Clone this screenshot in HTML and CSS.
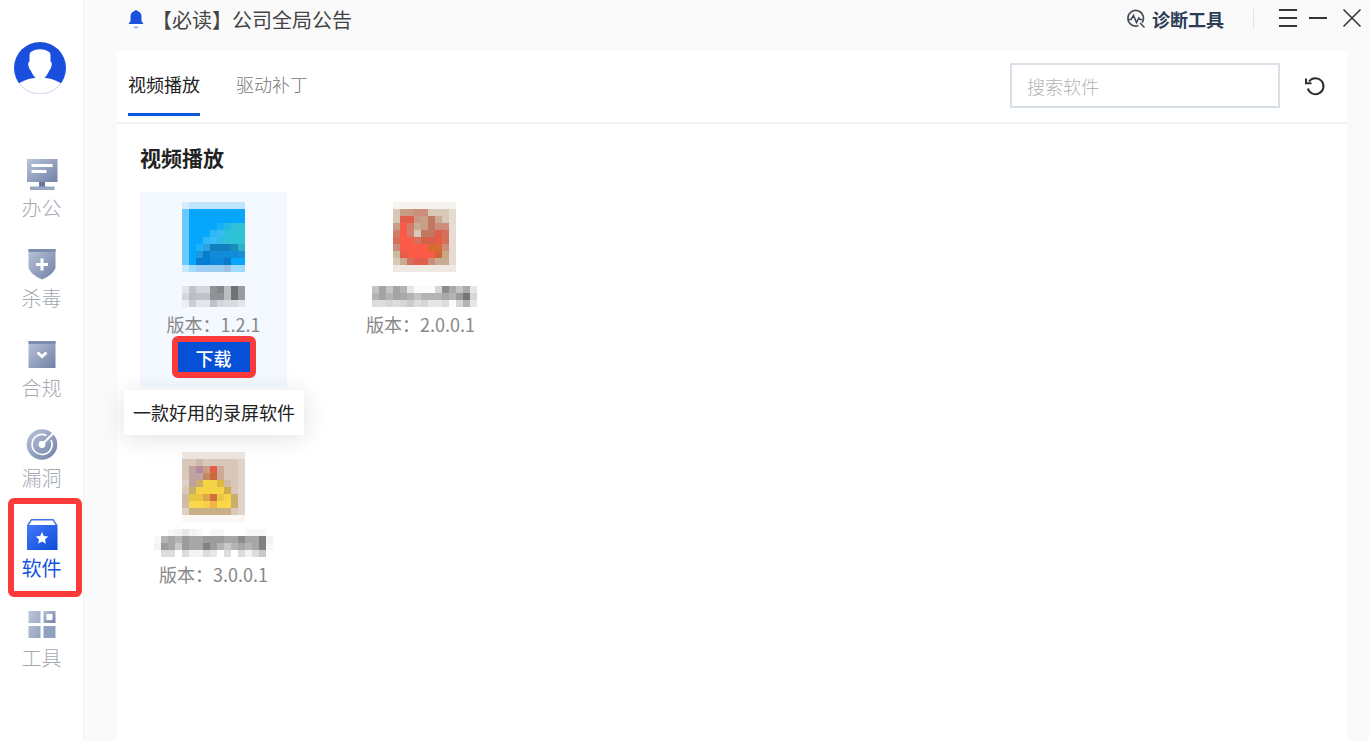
FILE: index.html
```html
<!DOCTYPE html>
<html lang="zh-CN">
<head>
<meta charset="utf-8">
<title>软件</title>
<link rel="stylesheet" href="styles.css">
</head>
<body>
<div class="app">
  <aside class="sidebar">
    <button class="avatar" aria-label="用户">
      <svg viewBox="0 0 52 52" width="52" height="52">
        <defs><clipPath id="round"><circle cx="26" cy="26" r="26"/></clipPath></defs>
        <circle cx="26" cy="26" r="26" fill="#194fdc"/>
        <g clip-path="url(#round)" fill="#fff">
          <path d="M15.500 13Q15.500 10 18.500 9Q21 7.300 26 7.300T33.500 9Q36.500 10 36.500 13V19.500Q38.500 20.500 37.500 24Q36.800 27 35.300 28.500Q33.500 33 30 36.500H22Q18.500 33 16.700 28.500Q15.200 27 14.500 24Q13.500 20.500 15.500 19.500Z"/>
          <path d="M4.500 41.500Q14 35.500 26 35.500T47.500 41.500L44 54H8Z"/>
        </g>
        <path d="M5 41A25.500 25.500 0 0 0 47 41" fill="none" stroke="#d3dbf4"/>
      </svg>
    </button>
    <nav class="nav">
      <button class="nav-item">
        <svg class="nav-icon" viewBox="0 0 40 40">
          <defs>
            <linearGradient id="steel" x1="0" y1="0" x2="1" y2="1"><stop offset="0" stop-color="#b8c4d9"/><stop offset="1" stop-color="#7081a6"/></linearGradient>
            <linearGradient id="pale" x1="0" y1="0" x2="1" y2="1"><stop offset="0" stop-color="#bcc7da"/><stop offset="1" stop-color="#93a2bf"/></linearGradient>
            <linearGradient id="royal" x1="0" y1="0" x2="1" y2="1"><stop offset="0" stop-color="#4478f8"/><stop offset="1" stop-color="#0b4cd9"/></linearGradient>
          </defs>
          <path fill="url(#steel)" d="M5 5H35.500V28H5Z"/>
          <path fill="#667798" d="M17 28H23V33H17Z"/>
          <path fill="#98a6c1" d="M8 32.500H32.500V36H8Z"/>
          <path fill="#fff" d="M9.500 10H30.500V13H9.500ZM9.500 16H24.500V19H9.500Z"/>
        </svg>
        <span>办公</span>
      </button>
      <button class="nav-item">
        <svg class="nav-icon" viewBox="0 0 40 40">
          <path fill="url(#steel)" d="M6.500 5H33.500V24Q31 31 20 35.500Q9 31 6.500 24Z"/>
          <path fill="#7c8dae" d="M6.500 5H33.500V8H6.500Z"/>
          <path stroke="#fff" stroke-width="3" d="M14 20.500H26M20 14.500V26.500"/>
        </svg>
        <span>杀毒</span>
      </button>
      <button class="nav-item">
        <svg class="nav-icon" viewBox="0 0 40 40">
          <path fill="url(#steel)" d="M6.500 7H33.500V34H6.500Z"/>
          <path fill="#7c8dae" d="M6.500 7H33.500V10H6.500Z"/>
          <path fill="none" stroke="#fff" stroke-width="3" d="M15.500 18.500L20 22.500L24.500 18.500"/>
        </svg>
        <span>合规</span>
      </button>
      <button class="nav-item">
        <svg class="nav-icon" viewBox="0 0 40 40">
          <circle cx="20" cy="20.500" r="15.300" fill="url(#steel)"/>
          <path fill="none" stroke="#fff" stroke-width="1.600" d="M24.500 11.500A10 10 0 1 0 29 16"/>
          <circle cx="20" cy="20.500" r="3.400" fill="#fff"/>
          <path stroke="#fff" stroke-width="2" d="M20 20.500L32 8.500"/>
        </svg>
        <span>漏洞</span>
      </button>
      <button class="nav-item active">
        <svg class="nav-icon" viewBox="0 0 40 40">
          <path fill="#fff" stroke="#4474e8" stroke-width="1.500" d="M5.700 11.500L9.500 5.700H31L34.800 11.500"/>
          <path fill="url(#royal)" d="M5 11H35.500V36H5Z"/>
          <path fill="#fff" d="M20 18l1.800 4 4.400.5-3.200 3 .9 4.300-3.900-2.200-3.900 2.200.9-4.300-3.200-3 4.400-.5Z"/>
        </svg>
        <span>软件</span>
      </button>
      <button class="nav-item">
        <svg class="nav-icon" viewBox="0 0 40 40">
          <path fill="url(#pale)" d="M6.500 7H18.500V19H6.500ZM6.500 22H18.500V34H6.500Z"/>
          <path fill="#93a2be" d="M21.500 22H33.500V34H21.500Z"/>
          <path fill="url(#steel)" d="M21.500 7H33.500V19H21.500Z"/>
          <path fill="#fff" d="M24.500 10H30.500V16H24.500Z"/>
        </svg>
        <span>工具</span>
      </button>
    </nav>
  </aside>

  <div class="main">
    <header class="topbar">
      <a class="notice" href="#">
        <svg viewBox="0 0 16 20" width="16" height="20">
          <path fill="#1950dc" d="M8 1Q9 1 9.300 2Q13.500 3 13.500 8V12L15.500 15H.5L2.500 12V8Q2.500 3 6.700 2Q7 1 8 1Z"/>
          <path fill="#8ba9ee" d="M5.500 17.500H10.500Q9.500 19.500 8 19.500T5.500 17.500Z"/>
        </svg>
        <span>【必读】公司全局公告</span>
      </a>
      <div class="tools">
        <button class="diagnose">
          <svg viewBox="0 0 20 20" width="20" height="20" fill="none" stroke="#444b57" stroke-width="1.600">
            <path d="M12.500 16.500A7.800 7.800 0 1 1 16 13.800M14 14L18.500 18.500"/>
            <path d="M2 10.500H5L7.500 6.500L10.500 13.500L12.800 9L14 10.500H16.500"/>
          </svg>
          <span>诊断工具</span>
        </button>
        <div class="window-buttons">
          <button aria-label="菜单"><svg viewBox="0 0 18 18" width="18" height="18"><path d="M0 1H18M0 9H18M0 17H18"/></svg></button>
          <button aria-label="最小化"><svg viewBox="0 0 18 18" width="18" height="18"><path d="M0 9H18"/></svg></button>
          <button class="close" aria-label="关闭"><svg viewBox="0 0 18 18" width="18" height="18"><path d="M.5 .5L17.500 17.500M17.500 .5L.5 17.500"/></svg></button>
        </div>
      </div>
    </header>

    <main class="panel">
      <div class="toolbar">
        <div class="tabs">
          <button class="tab current">视频播放</button>
          <button class="tab">驱动补丁</button>
        </div>
        <input class="search" type="text" placeholder="搜索软件" aria-label="搜索软件">
        <button class="refresh" aria-label="刷新">
          <svg viewBox="0 0 22 22" width="22" height="22" fill="none" stroke="#2e2e2e" stroke-width="2"><path d="M3.800 13.500A8 8 0 1 0 5 6.500"/><path d="M2 3.500V8.300H7.500"/></svg>
        </button>
      </div>

      <section class="content">
        <h2>视频播放</h2>
        <div class="grid">
          <article class="card selected">
            <svg class="mosaic" viewBox="0 0 9 10" width="63" height="70">
              <path fill="#05a6fb" d="M0 0H9V10H0Z"/>
              <path stroke="#c0e6fc" d="M0 .5h9"/>
              <path stroke="#d6ebfe" d="M0 .5h1"/>
              <path fill="#6ac8fb" d="M0 1H1V9H0Z"/>
              <path stroke="#18b0f6" d="M5 3.500h1"/><path stroke="#22b9e6" d="M6 3.500h1"/>
              <path fill="#2fc2d6" d="M7 3H9V6H6V5H7Z"/>
              <path stroke="#08a9fd" d="M3 4.500h1"/><path stroke="#2fb8f8" d="M4 4.500h1M3 5.500h1"/><path stroke="#35beee" d="M5 4.500h1"/><path stroke="#2ec1dd" d="M6 4.500h1"/>
              <path stroke="#39bdf9" d="M4 5.500h1"/><path stroke="#30bae6" d="M5 5.500h1"/>
              <path stroke="#1eb0fb" d="M2 6.500h1"/><path stroke="#2ba2e0" d="M3 6.500h1"/><path stroke="#117fbe" d="M4 6.500h3"/><path stroke="#178dbe" d="M7 6.500h1"/><path stroke="#2bb2cb" d="M8 6.500h1"/>
              <path stroke="#1c98e0" d="M2 7.500h1"/><path stroke="#0a7bc9" d="M3 7.500h1M6 8.500h1"/><path stroke="#128bd8" d="M4 7.500h4"/><path stroke="#1a90d3" d="M8 7.500h1"/>
              <path stroke="#067cd3" d="M2 8.500h2"/><path stroke="#0c87dc" d="M4 8.500h2"/>
              <path stroke="#9edbfd" d="M1 9.500h8"/><path stroke="#c8e8fd" d="M0 9.500h1"/><path stroke="#a0cdf2" d="M2 9.500h4"/><path stroke="#9fc3e2" d="M6 9.500h1"/>
            </svg>
            <svg class="mosaic name" viewBox="0 0 9 4" width="63" height="28">
              <path stroke="#e2e5ea" d="M0 1.500h1M2 3.500h2M8 3.500h1"/><path stroke="#c0c2c8" d="M1 1.500h1M2 2.500h2M4 3.500h1"/><path stroke="#d3d6dc" d="M2 1.500h2M0 2.500h1M5 3.500h1"/>
              <path stroke="#919297" d="M4 1.500h1M4 2.500h2"/><path stroke="#848589" d="M5 1.500h1"/><path stroke="#bbbdc3" d="M6 1.500h1M1 2.500h1M6 2.500h1"/><path stroke="#717274" d="M7 1.500h1M7 2.500h1"/><path stroke="#9b9ca0" d="M8 1.500h1M8 2.500h1"/>
              <path stroke="#ebeef5" d="M0 3.500h1"/><path stroke="#cbcdd3" d="M1 3.500h1"/><path stroke="#d9dce3" d="M6 3.500h2"/>
            </svg>
            <p class="version">版本：1.2.1</p>
            <button class="download">下载</button>
            <div class="tooltip" role="tooltip">一款好用的录屏软件</div>
          </article>

          <article class="card">
            <svg class="mosaic" viewBox="-1 0 10 10" width="70" height="70">
              <path fill="#d8c8b6" d="M0 0H9V10H0Z"/>
              <path stroke="#f7f3ef" d="M0 .5h9"/><path stroke="#efe9e3" d="M0 9.500h9"/><path fill="#e7dcd2" d="M8 1H9V9H8Z"/>
              <path fill="#fb5a47" d="M1 3H2V5H3V6H5V7H6V8H2V7H1Z"/>
              <path stroke="#c69f86" d="M1 1.500h1M4 2.500h1M4 3.500h1M0 3.500h1"/><path stroke="#c79a84" d="M2 1.500h1M3 2.500h1"/><path stroke="#cc8d7c" d="M3 1.500h2M6 3.500h2M0 6.500h1M7 6.500h1M5 8.500h1"/>
              <path stroke="#e15f4a" d="M1 2.500h2M1 7.500h1M3 8.500h2M6 4.500h1"/><path stroke="#c17860" d="M5 2.500h1M5 3.500h1M4 4.500h2"/><path stroke="#c8ab94" d="M6 2.500h1M3 3.500h1M1 8.500h1M6 8.500h2"/>
              <path stroke="#d07d6a" d="M2 3.500h1M2 4.500h1M0 4.500h1"/><path stroke="#d66f5c" d="M7 4.500h1M7 5.500h1M0 5.500h1M3 5.500h1M2 8.500h1"/><path stroke="#d5604a" d="M4 5.500h2"/><path stroke="#e95b42" d="M6 5.500h1"/>
              <path stroke="#fb5a47" d="M1 5.500h2M1 6.500h4M2 7.500h4"/><path stroke="#d66b2f" d="M5 6.500h2"/><path stroke="#cf6438" d="M6 7.500h1"/><path stroke="#cba57c" d="M7 7.500h1"/><path stroke="#cdb99f" d="M0 7.500h1"/>
            </svg>
            <svg class="mosaic name" viewBox="-1 0 16 4" width="112" height="28">
              <path stroke="#c4c4c4" d="M0 1.500h1M2 1.500h1M12 1.500h1M6 2.500h1"/><path stroke="#a4a4a4" d="M1 1.500h1M3 1.500h1M1 2.500h1M3 2.500h1"/><path stroke="#b4b4b4" d="M4 1.500h1M0 2.500h1M2 2.500h1M5 2.500h1M7 2.500h3M11 2.500h1M13 3.500h1"/>
              <path stroke="#e6e6e6" d="M5 1.500h1M14 1.500h1M8 3.500h2M14 3.500h1"/><path stroke="#fbfbfb" d="M6 1.500h3M11 3.500h1"/><path stroke="#d6d6d6" d="M9 1.500h1M14 2.500h1M2 3.500h1M4 3.500h1M7 3.500h1M12 3.500h1"/><path stroke="#8c8c8c" d="M10 1.500h1"/><path stroke="#aaa" d="M11 1.500h1M13 1.500h1M4 2.500h1M10 2.500h1"/>
              <path stroke="#9b9b9b" d="M12 2.500h1"/><path stroke="#767676" d="M13 2.500h1"/><path stroke="#ddd" d="M0 3.500h2M3 3.500h1M6 3.500h1M10 3.500h1"/><path stroke="#cbcbcb" d="M5 3.500h1"/>
            </svg>
            <p class="version">版本：2.0.0.1</p>
          </article>

          <article class="card">
            <svg class="mosaic" viewBox="0 0 9 10" width="63" height="70">
              <path fill="#d9c8b9" d="M0 0H9V10H0Z"/>
              <path stroke="#ebe4df" d="M0 .5h9"/><path stroke="#fcf7f4" d="M0 9.500h9"/><path fill="#e1d3c8" d="M8 1H9V9H8Z"/>
              <path stroke="#d0baa8" d="M2 1.500h1M0 6.500h1M0 7.500h1M6 4.500h1"/><path stroke="#bfa3a0" d="M1 2.500h1M1 3.500h2M1 4.500h1"/><path stroke="#b28a9d" d="M2 2.500h1"/><path stroke="#cc9c89" d="M3 2.500h1"/><path stroke="#e15f4a" d="M4 2.500h1"/><path stroke="#cda996" d="M5 2.500h1M5 3.500h1"/>
              <path stroke="#c58661" d="M3 3.500h1"/><path stroke="#cc693c" d="M4 3.500h1"/><path stroke="#c8af6a" d="M2 4.500h1M1 5.500h1M7 6.500h1M7 7.500h1"/><path stroke="#f6d247" d="M3 4.500h2M2 5.500h4M6 6.500h1"/><path stroke="#deb93f" d="M5 4.500h1"/><path stroke="#d0ac4b" d="M6 5.500h1"/>
              <path stroke="#e8c642" d="M1 6.500h2M5 6.500h1"/><path stroke="#dda843" d="M3 6.500h1"/><path stroke="#d0713f" d="M4 6.500h1"/><path stroke="#fad84a" d="M1 7.500h6"/><path stroke="#f7cf48" d="M3 7.500h1"/><path stroke="#f0b545" d="M4 7.500h1"/><path stroke="#c9af86" d="M1 8.500h6"/><path stroke="#dfd1c4" d="M0 4.500h1M0 8.500h1"/>
            </svg>
            <svg class="mosaic name" viewBox="0 0 17 4" width="119" height="28">
              <path stroke="#f8f8f8" d="M2 .5h1M6 .5h1M8 .5h2M13 .5h3M0 1.500h1M16 2.500h1"/><path stroke="#f3f3f3" d="M3 .5h3M16 1.500h1M0 2.500h1M5 3.500h2M13 3.500h1"/><path stroke="#e7e7e7" d="M4 .5h1M8 3.500h1"/>
              <path stroke="#b4b4b4" d="M1 1.500h1M3 1.500h1M9 2.500h1M11 2.500h1M13 2.500h1"/><path stroke="#a7a7a7" d="M2 1.500h1M5 1.500h2M10 1.500h2M13 1.500h2M2 2.500h1M5 2.500h2M12 2.500h1M14 2.500h1"/><path stroke="#9c9c9c" d="M4 1.500h1M7 1.500h3M1 2.500h1M4 2.500h1M8 2.500h1"/><path stroke="#8c8c8c" d="M12 1.500h1"/><path stroke="#818181" d="M15 1.500h1M15 2.500h1M7 2.500h1"/>
              <path stroke="#c8c8c8" d="M3 2.500h1M10 2.500h1M15 3.500h1"/><path stroke="#dcdcdc" d="M1 3.500h2M4 3.500h1M7 3.500h1M10 3.500h1M12 3.500h1M14 3.500h1"/>
            </svg>
            <p class="version">版本：3.0.0.1</p>
          </article>
        </div>
      </section>
    </main>
  </div>
</div>
</body>
</html>
```
FILE: styles.css
```css
* {
  box-sizing: border-box;
}

body {
  margin: 0;
  background: #fafafa;
  font-family: "Noto Sans CJK SC", sans-serif;
  font-size: 18px;
  color: #222;
}

button {
  padding: 0;
  border: 0;
  background: none;
  color: inherit;
  font: inherit;
  cursor: pointer;
}

svg {
  display: block;
}

.app {
  display: flex;
  min-height: 100vh;
}

.sidebar {
  flex: 0 0 84px;
  padding-top: 42px;
  background: #fff;
  border-right: 1px solid #f3f3f3;
}

.avatar {
  display: block;
  margin-left: 14px;
}

.nav {
  display: flex;
  flex-direction: column;
  gap: 22px;
  margin-top: 60px;
}

.nav-item {
  position: relative;
  display: flex;
  flex-direction: column;
  align-items: center;
  font-size: 20px;
  font-weight: 300;
  line-height: 28px;
  color: #a3a8b1;
}

.nav-icon {
  width: 40px;
  height: 40px;
}

.nav-item.active {
  font-weight: 400;
  color: #1453dc;
}

.nav-item.active::after {
  content: "";
  position: absolute;
  inset: -16px 1px -15px 8px;
  border: 6px solid #fb3a3a;
  border-radius: 6px;
}

.main {
  flex: 1;
  display: flex;
  flex-direction: column;
  padding-left: 33px;
}

.topbar {
  display: flex;
  justify-content: space-between;
  height: 51px;
  padding: 0 8px 13px 11px;
}

.notice {
  display: flex;
  align-items: center;
  gap: 8px;
  font-size: 20px;
  color: #444;
  text-decoration: none;
}

.tools,
.diagnose,
.window-buttons {
  display: flex;
  align-items: center;
}

.diagnose {
  gap: 6px;
  font-weight: 700;
  color: #2c3c55;
}

.window-buttons {
  gap: 12px;
  margin-left: 29px;
  padding: 0 0 2px 26px;
  background: linear-gradient(#e2e2e2, #e2e2e2) left center / 1px 20px no-repeat;
}

.window-buttons svg {
  stroke: #333;
  stroke-width: 2;
}

.window-buttons .close {
  margin-left: 4px;
}

.window-buttons .close svg {
  stroke-width: 1.5;
}

.panel {
  flex: 1;
  margin-right: 22px;
  background: #fff;
}

.toolbar {
  display: flex;
  align-items: center;
  height: 73px;
  padding: 0 21px 2px 11px;
  border-bottom: 2px solid #f2f2f2;
}

.tabs {
  display: flex;
  gap: 36px;
  align-self: stretch;
  margin-right: auto;
  padding-bottom: 4px;
}

.tab {
  padding-top: 4px;
  border-bottom: 3px solid transparent;
  color: #777;
  font-weight: 300;
}

.tab.current {
  border-color: #0b56dc;
  color: #222;
  font-weight: 400;
}

.search {
  width: 270px;
  height: 45px;
  padding: 0 15px;
  border: 2px solid #d9dfe8;
  background: #fff;
  color: #333;
  font: inherit;
}

.search::placeholder {
  color: #b3b3b3;
  font-weight: 300;
}

.refresh {
  margin-left: 24px;
}

.content {
  padding: 17px 23px;
}

h2 {
  margin: 0 0 19px;
  font-size: 21px;
  line-height: 32px;
}

.grid {
  display: grid;
  grid-template-columns: repeat(2, 147px);
  grid-auto-rows: 195px;
  gap: 55px 60px;
}

.card {
  position: relative;
  display: flex;
  flex-direction: column;
  align-items: center;
  padding-top: 10px;
}

.card.selected {
  background: #f4f8ff;
}

.mosaic {
  shape-rendering: crispEdges;
}

.name {
  margin-top: 7px;
}

.version {
  margin: 6px 0 7px;
  line-height: 22px;
  color: #888;
}

.download {
  position: relative;
  width: 72px;
  height: 30px;
  background: #0650d8;
  color: #fff;
  font-weight: 500;
  line-height: 32px;
}

.download::after {
  content: "";
  position: absolute;
  inset: -6px;
  border: 6px solid #fb3a3a;
  border-radius: 6px;
}

.tooltip {
  position: absolute;
  top: 198px;
  left: -16px;
  padding: 9px;
  background: #fff;
  box-shadow: 0 3px 24px rgba(0, 0, 0, 0.12);
  line-height: 27px;
  white-space: nowrap;
}
```
